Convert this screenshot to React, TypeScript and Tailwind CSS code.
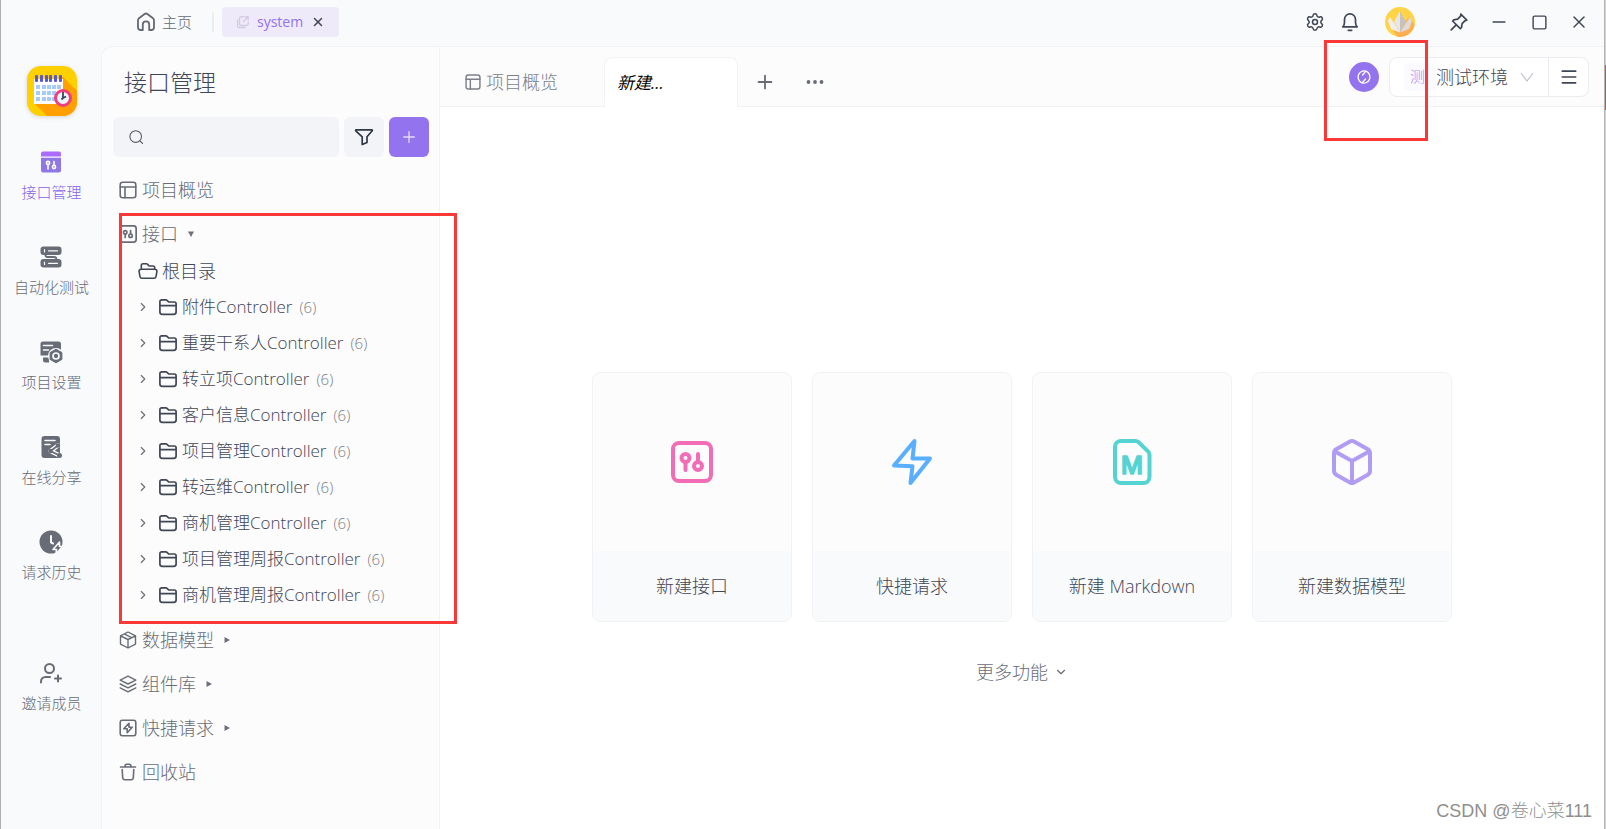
// API management workspace
// Title bar, side rail, API tree & start page

import type { ReactNode } from 'react';
import { Settings, X, Plus, Square, Minus, ChevronRight, ChevronDown, Menu } from 'lucide-react';

/* =======================
   Types
======================= */

type IconProps = { className?: string };

type RailItem = {
  name: string;
  icon: React.ElementType;
  active?: boolean;
};

type Folder = {
  name: string;
  count: number;
};

type StartCard = {
  name: string;
  icon: React.ElementType;
  color: string;
};

/* =======================
   Icons
======================= */

const Svg = ({ className, box = 24, children }: IconProps & { box?: number; children: ReactNode }) => (
  <svg
    className={className}
    viewBox={`0 0 ${box} ${box}`}
    fill="none"
    stroke="currentColor"
    strokeWidth={2}
    strokeLinecap="round"
    strokeLinejoin="round"
    aria-hidden="true"
  >
    {children}
  </svg>
);

const HomeIcon = ({ className }: IconProps) => (
  <Svg className={className} box={20}>
    <path
      d="M6.8 18H4.2A2.4 2.4 0 0 1 2 15.6V8.3c0-.8.4-1.5 1-2L8.6 2c.8-.6 2-.6 2.800 0L17 6.300c.6.500 1 1.200 1 2v7.300a2.400 2.400 0 0 1-2.200 2.400h-2.600v-5.400a3.200 3.200 0 0 0-6.400 0z"
      strokeWidth="1.800"
    />
  </Svg>
);

const LinkIcon = ({ className }: IconProps) => (
  <Svg className={className} box={16}>
    <path d="M8.500 2H6a2 2 0 0 0-2 2v6a2 2 0 0 0 2 2h6a2 2 0 0 0 2-2V8M10.500 2H14v3.500M14 2 8.500 7.500M1.800 5.500V12a2.300 2.300 0 0 0 2.300 2.300h6.400" strokeWidth="1.500" />
  </Svg>
);

const BellIcon = ({ className }: IconProps) => (
  <Svg className={className} box={20}>
    <path d="M2.800 14.800h14.400c-1.300-1.300-1.700-2.600-1.700-4.600V7.400a5.500 5.500 0 0 0-11 0v2.800c0 2-.4 3.300-1.700 4.600zM8.300 18.300h3.400" strokeWidth="1.700" />
  </Svg>
);

const PinIcon = ({ className }: IconProps) => (
  <Svg className={className} box={20}>
    <path d="m11.800 2.200 6 6-1.700.5-3 3-.6 3.800-1.200 1.200L3.600 9l1.200-1.200 3.800-.6 3-3zM7.200 12.800l-5 5" strokeWidth="1.700" />
  </Svg>
);

const SearchIcon = ({ className }: IconProps) => (
  <Svg className={className} box={16}>
    <circle cx="7.500" cy="7.500" r="6.500" strokeWidth="1.200" />
    <path d="m12.300 12.300 3 3" strokeWidth="1.200" />
  </Svg>
);

const FilterIcon = ({ className }: IconProps) => (
  <Svg className={className} box={20}>
    <path d="M2.200 2.800h15.600c.5 0 .8.600.4 1L13 9.800v5.700l-4.800 2V9.800L1.800 3.800c-.4-.4-.1-1 .4-1z" strokeWidth="1.700" />
  </Svg>
);

const LayoutIcon = ({ className }: IconProps) => (
  <Svg className={className} box={18}>
    <rect x="1.200" y="1.200" width="15.600" height="15.600" rx="2.500" strokeWidth="1.600" />
    <path d="M1.200 6h15.600M6 6v10.800" strokeWidth="1.600" />
  </Svg>
);

const ApiIcon = ({ className }: IconProps) => (
  <Svg className={className} box={42}>
    <rect x="2" y="2" width="38" height="38" rx="6" strokeWidth="4" />
    <circle cx="14.500" cy="17" r="4" strokeWidth="4" />
    <circle cx="27" cy="25" r="4" strokeWidth="4" />
    <path d="M14.500 21v8M27 13v8" strokeWidth="4" />
  </Svg>
);

const FolderIcon = ({ className }: IconProps) => (
  <Svg className={className} box={20}>
    <path d="M1.900 15V4.600A1.800 1.800 0 0 1 3.700 2.800h4.100c.5 0 1 .2 1.300.6l1.500 1.600h5.700a1.800 1.800 0 0 1 1.800 1.800V15a2.300 2.300 0 0 1-2.300 2.300H4.200A2.300 2.300 0 0 1 1.900 15zM1.900 8.600h16.200" strokeWidth="1.700" />
  </Svg>
);

const FolderOpenIcon = ({ className }: IconProps) => (
  <Svg className={className} box={20}>
    <path d="M3.300 8.300V4.600a1.800 1.800 0 0 1 1.800-1.800h3.200c.5 0 1 .2 1.300.6l1.500 1.600h3.800a1.800 1.800 0 0 1 1.800 1.800v1.500M3 8.300h14a2 2 0 0 1 1.900 2.400l-.9 4.900a2.100 2.100 0 0 1-2 1.700H4a2.100 2.100 0 0 1-2-1.700l-.9-4.900A2 2 0 0 1 3 8.300z" strokeWidth="1.600" />
  </Svg>
);

const ModelIcon = ({ className }: IconProps) => (
  <Svg className={className} box={18}>
    <path d="m9 1 7.500 3.800v8.400L9 17l-7.500-3.800V4.800zM1.500 4.800 9 8.500l7.500-3.700M9 8.500V17M5.300 2.900l7.200 3.700" strokeWidth="1.400" />
  </Svg>
);

const LayersIcon = ({ className }: IconProps) => (
  <Svg className={className} box={18}>
    <path d="m9 1.200 7.800 3.900L9 9 1.200 5.100zM1.200 9 9 12.900 16.800 9M1.200 12.900 9 16.800l7.800-3.900" strokeWidth="1.400" />
  </Svg>
);

const QuickIcon = ({ className }: IconProps) => (
  <Svg className={className} box={18}>
    <rect x="1.200" y="1.200" width="15.600" height="15.600" rx="2.200" strokeWidth="1.600" />
    <path d="M10 4.300 4.800 9.800h3.400v3.900l5-5.500H10z" strokeWidth="1.600" />
  </Svg>
);

const TrashIcon = ({ className }: IconProps) => (
  <Svg className={className} box={18}>
    <path d="M1.500 4h15M6 4c0-1.700.7-2.700 1.700-2.700h2.600C11.300 1.300 12 2.300 12 4M3.200 6.500l.5 8.200a2.200 2.200 0 0 0 2.200 2h6.200a2.200 2.200 0 0 0 2.200-2l.5-8.200" strokeWidth="1.600" />
  </Svg>
);

const SyncIcon = ({ className }: IconProps) => (
  <Svg className={className} box={16}>
    <path d="M5.500 13.600A6.200 6.200 0 0 1 10 2.100L6.500 6M10.500 2.400A6.200 6.200 0 0 1 6 13.900L9.500 10" strokeWidth="1.300" />
  </Svg>
);

const BoltIcon = ({ className }: IconProps) => (
  <Svg className={className} box={48}>
    <path d="M26.500 3 6 27.500l18.500.8L22.500 45 42 20.500H24.500z" strokeWidth="4" />
  </Svg>
);

const MarkdownIcon = ({ className }: IconProps) => (
  <Svg className={className} box={48}>
    <path d="M13 3h14.500c1.300 0 2.400.5 3.300 1.300l9.400 9.400c.8.800 1.300 2 1.300 3.200V39a6 6 0 0 1-6 6H13a6 6 0 0 1-6-6V9a6 6 0 0 1 6-6z" strokeWidth="4" />
    <text
      x="24"
      y="36"
      textAnchor="middle"
      fill="currentColor"
      strokeWidth="1.500"
      className="font-['Inter'] text-[24px] font-medium"
    >
      M
    </text>
  </Svg>
);

const CubeIcon = ({ className }: IconProps) => (
  <Svg className={className} box={48}>
    <path d="M22 3.600 8.200 11.300A4.500 4.500 0 0 0 6 15.200v17.600c0 1.600.8 3 2.200 3.900L22 44.400c1.200.7 2.800.7 4 0l13.800-7.700a4.500 4.500 0 0 0 2.200-3.900V15.200c0-1.600-.8-3-2.200-3.900L26 3.600a4 4 0 0 0-4 0zM7 13.500 24 23l17-9.500M24 23v21.500" strokeWidth="4" />
  </Svg>
);

const RailApiIcon = ({ className }: IconProps) => (
  <svg className={className} viewBox="0 0 24 24" fill="none" aria-hidden="true">
    <path d="M4 1.500h16A2 2 0 0 1 22 3.500V6.500H2V3.500A2 2 0 0 1 4 1.500z" fill="#ac6bff" />
    <path d="M2 7.800h20v12.700a2 2 0 0 1-2 2H4a2 2 0 0 1-2-2z" fill="#8f77e6" />
    <g stroke="#fff" strokeWidth="1.600" strokeLinecap="round">
      <circle cx="9" cy="13" r="1.600" />
      <circle cx="15" cy="17" r="1.600" />
      <path d="M9 14.800V19M15 11.500v3.700" />
    </g>
  </svg>
);

const RailTestIcon = ({ className }: IconProps) => (
  <svg className={className} viewBox="0 0 24 24" fill="none" aria-hidden="true">
    <rect x="1.500" y="1.500" width="21" height="8.500" rx="3" fill="currentColor" />
    <rect x="1.500" y="14" width="21" height="8.500" rx="3" fill="currentColor" />
    <path d="M6.500 10c0 2.500 2 2 5.500 2s5.500-.500 5.500 2.500" stroke="currentColor" strokeWidth="2" />
    <path d="M5.500 4.500v2.500M9.500 5.800h9M5.500 17v2.500M9.500 18.300h9" stroke="#f9fafc" strokeWidth="1.200" strokeLinecap="round" />
  </svg>
);

const RailSettingIcon = ({ className }: IconProps) => (
  <svg className={className} viewBox="0 0 24 24" fill="none" aria-hidden="true">
    <path d="M4 1.500h15.500a2.500 2.500 0 0 1 2.500 2.500v12H1.500V4A2.500 2.500 0 0 1 4 1.500zM4 17.500h6v5H6.500A2.500 2.500 0 0 1 4 20z" fill="currentColor" />
    <path d="M4.500 5.500h9M4.500 10h5M1 16.300h10" stroke="#f9fafc" strokeWidth="1.600" strokeLinecap="round" />
    <circle cx="17" cy="16" r="8" fill="#f9fafc" />
    <path d="m17 9.200 5.900 3.400v6.800L17 22.800l-5.900-3.400v-6.800z" fill="currentColor" stroke="currentColor" strokeLinejoin="round" />
    <circle cx="17" cy="16" r="3" stroke="#f9fafc" strokeWidth="1.700" />
  </svg>
);

const RailShareIcon = ({ className }: IconProps) => (
  <svg className={className} viewBox="0 0 24 24" fill="none" aria-hidden="true">
    <path d="M5.500 1H18a3 3 0 0 1 3 3v16a3 3 0 0 1-3 3H5.500a3 3 0 0 1-3-3V4a3 3 0 0 1 3-3z" fill="currentColor" />
    <path d="M6 5.500h10M6 9.500h5" stroke="#f9fafc" strokeWidth="1.600" strokeLinecap="round" />
    <path d="m19 10.500-7.500 5.500 9 4.500" stroke="#f9fafc" strokeWidth="4.500" strokeLinejoin="round" strokeLinecap="round" />
    <path d="m19 10.500-7.500 5.500 9 4.500" stroke="currentColor" strokeWidth="1.800" />
    <circle cx="19" cy="10.500" r="2.200" fill="currentColor" />
    <circle cx="11.500" cy="16" r="2.200" fill="currentColor" />
    <circle cx="20.500" cy="20.500" r="2.500" fill="currentColor" />
  </svg>
);

const RailHistoryIcon = ({ className }: IconProps) => (
  <svg className={className} viewBox="0 0 24 24" fill="none" aria-hidden="true">
    <circle cx="12" cy="12" r="11.500" fill="currentColor" />
    <path d="M12 6v6.500l2 1" stroke="#f9fafc" strokeWidth="2" strokeLinecap="round" />
    <path d="m20.500 12-6.500 7.500h3.500L17 24l6.500-7.500h-3z" fill="currentColor" stroke="#f9fafc" strokeWidth="1.600" strokeLinejoin="round" />
  </svg>
);

const InviteIcon = ({ className }: IconProps) => (
  <svg className={className} viewBox="0 0 24 24" fill="none" stroke="currentColor" strokeWidth="2" strokeLinecap="round" aria-hidden="true">
    <circle cx="10.500" cy="7.500" r="4.500" />
    <path d="M2 21.500v-1a4.500 4.500 0 0 1 4.500-4.500h4.500M19 14.500v6M16 17.500h6" />
  </svg>
);

const AppLogo = ({ className }: IconProps) => (
  <svg className={className} viewBox="0 0 50 50" aria-hidden="true">
    <defs>
      <clipPath id="logo-shape">
        <rect width="50" height="50" rx="14" />
      </clipPath>
    </defs>
    <g clipPath="url(#logo-shape)">
      <rect width="50" height="50" fill="#ffd000" />
      <path d="M36 11 50 25v25H20L7 37z" fill="#ffa000" />
      <rect x="7" y="13" width="29" height="25" fill="#fff" />
      <g fill="#a6cbf8">
        {[19, 25, 31].map((y) =>
          [9, 15, 20, 25, 30].map((x) => <rect key={`${x}-${y}`} x={x} y={y} width="4" height="4" />)
        )}
      </g>
      <g fill="#5757d8">
        {[8, 13, 18, 22, 27, 32].map((x) => (
          <rect key={x} x={x} y="9" width="3" height="7" rx="1" />
        ))}
      </g>
      <circle cx="36" cy="32" r="7.500" fill="#eef5fb" stroke="#ef3f7c" strokeWidth="3" />
      <path d="M36 26v6l3-1.500M36 32l-1.500 1.500" stroke="#33475c" strokeWidth="1.800" fill="none" />
    </g>
  </svg>
);

const Avatar = ({ className }: IconProps) => (
  <svg className={className} viewBox="0 0 30 30" aria-hidden="true">
    <circle cx="15" cy="15" r="15" fill="#ffd447" />
    <path d="m25 10 4.500 8A15 15 0 0 1 13 29.900L8 24z" fill="#ffae52" />
    <path d="m5 10 10 15.500L6 22 3 14z" fill="#f1efee" />
    <path d="m25 10-10 15.500L24 22l3-8z" fill="#dedbd9" />
    <path d="M15 4 9 15l6 10.500z" fill="#e9e6e4" />
    <path d="m15 4 6 11-6 10.500z" fill="#c6c2c0" />
  </svg>
);

const DotsIcon = ({ className }: IconProps) => (
  <svg className={className} viewBox="0 0 18 6" fill="currentColor" aria-hidden="true">
    <circle cx="2.500" cy="3" r="1.900" />
    <circle cx="9" cy="3" r="1.900" />
    <circle cx="15.500" cy="3" r="1.900" />
  </svg>
);

const Caret = ({ open }: { open?: boolean }) => (
  <svg className="size-2 text-[#6b707b]" viewBox="0 0 8 8" fill="currentColor" aria-hidden="true">
    <path d={open ? 'M1 1.500h6L4 7z' : 'M1.500 1v6L7 4z'} />
  </svg>
);

/* =======================
   Data
======================= */

const railItems: RailItem[] = [
  { name: '接口管理', icon: RailApiIcon, active: true },
  { name: '自动化测试', icon: RailTestIcon },
  { name: '项目设置', icon: RailSettingIcon },
  { name: '在线分享', icon: RailShareIcon },
  { name: '请求历史', icon: RailHistoryIcon },
];

const folders: Folder[] = [
  { name: '附件Controller', count: 6 },
  { name: '重要干系人Controller', count: 6 },
  { name: '转立项Controller', count: 6 },
  { name: '客户信息Controller', count: 6 },
  { name: '项目管理Controller', count: 6 },
  { name: '转运维Controller', count: 6 },
  { name: '商机管理Controller', count: 6 },
  { name: '项目管理周报Controller', count: 6 },
  { name: '商机管理周报Controller', count: 6 },
];

const cards: StartCard[] = [
  { name: '新建接口', icon: ApiIcon, color: 'size-[42px] text-[#f26db6]' },
  { name: '快捷请求', icon: BoltIcon, color: 'size-12 text-[#58afff]' },
  { name: '新建 Markdown', icon: MarkdownIcon, color: 'size-12 text-[#55d3d3]' },
  { name: '新建数据模型', icon: CubeIcon, color: 'size-12 text-[#b19cf4]' },
];

/* =======================
   Components
======================= */

const TitleBar = () => (
  <header className="flex h-[46px] shrink-0 items-start justify-between pr-[15px] pl-[135px] text-[#3f4656]">
    <div className="flex h-11 items-center">
      <a href="#home" className="flex items-center gap-1.5 text-[15px] text-[#636873]">
        <HomeIcon className="size-5" />
        主页
      </a>
      <span className="mr-2 ml-5 h-5 w-0.5 bg-[#ececf1]" />
      <div className="flex h-[30px] items-center rounded bg-[#eeeaf9] px-3.5">
        <LinkIcon className="size-3.5 text-[#d3cce4]" />
        <a href="#system" className="ml-[7px] text-sm font-normal text-[#9373ee]">
          system
        </a>
        <button type="button" aria-label="关闭 system" className="ml-2">
          <X className="size-3.5" strokeWidth={2.5} />
        </button>
      </div>
    </div>

    <div className="flex h-11 items-center">
      <button type="button" aria-label="设置" className="mr-[15px]">
        <Settings className="size-5" strokeWidth={1.8} />
      </button>
      <button type="button" aria-label="通知" className="mr-[25px]">
        <BellIcon className="size-5" />
      </button>
      <button type="button" aria-label="账户" className="mr-[34px]">
        <Avatar className="size-[30px]" />
      </button>
      <div className="flex items-center gap-5">
        <button type="button" aria-label="置顶">
          <PinIcon className="size-5" />
        </button>
        <button type="button" aria-label="最小化" className="flex w-5 justify-center">
          <Minus className="size-5" />
        </button>
        <button type="button" aria-label="最大化" className="flex w-5 justify-center">
          <Square className="size-[17px]" strokeWidth={2} />
        </button>
        <button type="button" aria-label="关闭" className="flex w-5 justify-center">
          <X className="size-5" strokeWidth={1.8} />
        </button>
      </div>
    </div>
  </header>
);

const Rail = () => (
  <nav className="flex w-[101px] shrink-0 flex-col items-center pt-5 text-[15px] leading-5 text-[#686c77]">
    <AppLogo className="size-[50px] drop-shadow-sm" />
    <div className="mt-[34px] flex flex-col gap-[43px]">
      {railItems.map((item) => {
        const Icon = item.icon;

        return (
          <a
            key={item.name}
            href="#rail"
            className={`flex flex-col items-center gap-2 ${item.active ? 'text-[#8565e6]' : ''}`}
          >
            <Icon className="size-6" />
            {item.name}
          </a>
        );
      })}
    </div>
    <button type="button" className="mt-[79px] flex flex-col items-center gap-2">
      <InviteIcon className="size-6" />
      邀请成员
    </button>
  </nav>
);

const Section = ({ name, icon: Icon, open, plain }: { name: string; icon: React.ElementType; open?: boolean; plain?: boolean }) => (
  <a href="#section" className="flex h-11 items-center pl-[17px] text-lg text-[#686c77]">
    <Icon className="mr-[5px] size-[18px]" />
    <span className="mr-[9px]">{name}</span>
    {!plain && <Caret open={open} />}
  </a>
);

const Sidebar = () => (
  <aside className="w-[338px] shrink-0 border-r border-[#f1f2f5]">
    <h1 className="pt-[19px] pl-[22px] text-[23px] leading-8 text-[#3f4656]">接口管理</h1>

    {/* Search */}
    <div className="mt-[19px] flex gap-[5px] pr-2.5 pl-[11px]">
      <label className="flex h-10 min-w-0 flex-1 items-center rounded-md bg-[#f3f4f8] pl-4 text-[#555a66]">
        <SearchIcon className="size-4" />
        <input type="text" aria-label="搜索" className="ml-2 w-full min-w-0 bg-transparent outline-none" />
      </label>
      <button type="button" aria-label="筛选" className="flex size-10 items-center justify-center rounded-md bg-[#f3f4f8] text-[#2f3644]">
        <FilterIcon className="size-5" />
      </button>
      <button type="button" aria-label="新建" className="flex size-10 items-center justify-center rounded-md bg-[#9373ee] text-[#e4dcfb]">
        <Plus className="size-[18px]" strokeWidth={1.8} />
      </button>
    </div>

    {/* Tree */}
    <div className="mt-[11px]">
      <Section name="项目概览" icon={LayoutIcon} plain />
      <Section name="接口" icon={ApiIcon} open />
      <div className="-mt-[3px] mb-[5px] text-[#3f4656]">
        <a href="#root" className="flex h-9 items-center gap-1 pl-9 text-lg">
          <FolderOpenIcon className="size-5" />
          根目录
        </a>
        {folders.map((folder) => (
          <a key={folder.name} href="#folder" className="flex h-9 items-center pl-[34px] text-[17px]">
            <ChevronRight className="mr-2 size-3.5 text-[#6b707b]" />
            <FolderIcon className="mr-1 size-5" />
            {folder.name}
            <span className="ml-[7px] text-[15px] text-[#7b7f88]">({folder.count})</span>
          </a>
        ))}
      </div>
      <Section name="数据模型" icon={ModelIcon} />
      <Section name="组件库" icon={LayersIcon} />
      <Section name="快捷请求" icon={QuickIcon} />
      <Section name="回收站" icon={TrashIcon} plain />
    </div>
  </aside>
);

const TabBar = () => (
  <div className="flex h-[60px] shrink-0 items-end justify-between border-b border-[#f1f2f5]">
    <div className="-mb-px flex items-center">
      <a href="#overview" className="flex h-[50px] w-[164px] items-center gap-[5px] pl-[25px] text-lg text-[#7b7f88]">
        <LayoutIcon className="size-4" />
        项目概览
      </a>
      <a
        href="#new"
        className="flex h-[50px] w-[134px] items-center rounded-t-lg border border-b-0 border-[#f1f2f5] bg-white pl-3 text-[17px] font-normal text-black italic"
      >
        新建...
      </a>
      <button type="button" aria-label="新标签" className="ml-4 text-[#686c77]">
        <Plus className="size-[22px]" />
      </button>
      <button type="button" aria-label="更多" className="ml-[30px] text-[#686c77]">
        <DotsIcon className="w-[18px]" />
      </button>
    </div>

    <div className="mr-[15px] mb-[9px] flex items-center gap-2.5">
      <button type="button" aria-label="同步" className="flex size-[30px] items-center justify-center rounded-full bg-[#9373ee] text-white">
        <SyncIcon className="size-4" />
      </button>
      <div className="flex h-10 w-[200px] rounded-lg border border-[#ebecf0] bg-white">
        <button type="button" className="flex flex-1 items-center border-r border-[#ebecf0] pl-3.5 text-lg text-[#3f4656]">
          <span className="flex h-7 w-8 items-center rounded bg-[#fbfaff] pl-1.5 text-[15px] text-[#a98af2]">测</span>
          测试环境
          <svg className="ml-3 h-2.5 w-3.5 text-[#bfc2c9]" viewBox="0 0 14 10" fill="none" stroke="currentColor" aria-hidden="true">
            <path d="m1 1 6 8 6-8" strokeWidth="1.200" />
          </svg>
        </button>
        <button type="button" aria-label="环境管理" className="flex w-[39px] items-center justify-center text-[#3f4656]">
          <Menu className="size-5" />
        </button>
      </div>
    </div>
  </div>
);

const StartPage = () => (
  <section className="flex flex-1 flex-col items-center bg-white pt-[265px]">
    <div className="flex gap-5">
      {cards.map((card) => {
        const Icon = card.icon;

        return (
          <button
            key={card.name}
            type="button"
            className="flex h-[250px] w-[200px] flex-col overflow-hidden rounded-lg border border-[#f1f2f5] bg-[#fcfcfc]"
          >
            <span className="flex w-full flex-1 items-center justify-center">
              <Icon className={card.color} />
            </span>
            <span className="flex h-[70px] w-full items-center justify-center bg-[#f9fafc] text-lg text-[#3f4656]">
              {card.name}
            </span>
          </button>
        );
      })}
    </div>
    <button type="button" className="mt-9 flex items-center gap-1.5 text-lg text-[#686c77]">
      更多功能
      <ChevronDown className="size-3.5" />
    </button>
  </section>
);

/* =======================
   Page
======================= */

const App = () => {
  return (
    <div className="relative flex min-h-screen overflow-hidden border-l border-[#b0b0b3] bg-[#f9fafc] font-['Open_Sans','Noto_Sans_CJK_SC',sans-serif] font-light">
      <div className="flex min-w-0 flex-1 flex-col">
        <TitleBar />
        <div className="flex flex-1">
          <Rail />
          <div className="-ml-px flex min-w-0 flex-1 rounded-tl-xl border-t border-l border-[#f1f2f5] bg-[#fcfcfc]">
            <Sidebar />
            <main className="flex min-w-0 flex-1 flex-col">
              <TabBar />
              <StartPage />
            </main>
          </div>
        </div>
      </div>

      {/* Window edge */}
      <div className="w-0.5 shrink-0 border-l border-[#b4b4b4] bg-[#d2d2d2] pt-[65px]">
        <div className="h-[45px] bg-[#c8573a]" />
      </div>

      {/* Highlight frames */}
      <div className="pointer-events-none absolute top-[213px] left-[118px] h-[411px] w-[338px] border-3 border-[#fb3838]" />
      <div className="pointer-events-none absolute top-10 right-[178px] h-[101px] w-[104px] border-3 border-[#fb3838]" />

      <p className="absolute right-3.5 bottom-1 font-['Liberation_Sans','Noto_Sans_CJK_SC',sans-serif] text-lg text-[#8f8f8f]">
        CSDN @卷心菜111
      </p>
    </div>
  );
};

export default App;
